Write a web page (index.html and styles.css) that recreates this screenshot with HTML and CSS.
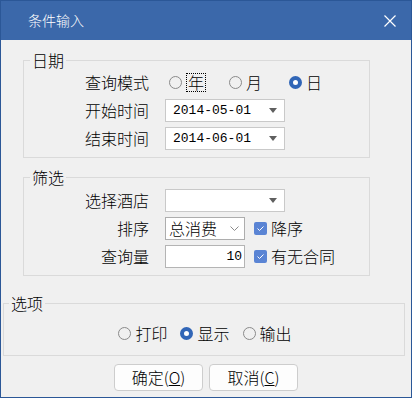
FILE: index.html
```html
<!DOCTYPE html>
<html lang="zh">

<head>
    <meta charset="UTF-8">
    <title>条件输入</title>
    <link rel="stylesheet" href="styles.css">
</head>

<body>
    <div class="window">
        <div class="titlebar">
            <span class="title">条件输入</span>
            <svg class="close" width="12" height="12" viewBox="0 0 12 12">
                <path d="M0.5 0.5 L11.5 11.5 M11.5 0.5 L0.5 11.5" stroke="#fff" stroke-width="1.2" fill="none" />
            </svg>
        </div>

        <div class="dlg_body">
            <fieldset class="group group_date">
                <legend>日期</legend>
                <div class="form_grid">
                    <span class="lbl">查询模式</span>
                    <div class="radios">
                        <span class="radio"><span class="dot"></span><span class="focus">年</span></span>
                        <span class="radio"><span class="dot"></span>月</span>
                        <span class="radio"><span class="dot on"></span>日</span>
                    </div>

                    <span class="lbl">开始时间</span>
                    <div class="combo">
                        <span class="mono">2014-05-01</span>
                        <svg width="8" height="5" viewBox="0 0 8 5"><polygon points="0,0 8,0 4,5" fill="#5f5f5f" /></svg>
                    </div>

                    <span class="lbl">结束时间</span>
                    <div class="combo">
                        <span class="mono">2014-06-01</span>
                        <svg width="8" height="5" viewBox="0 0 8 5"><polygon points="0,0 8,0 4,5" fill="#5f5f5f" /></svg>
                    </div>
                </div>
            </fieldset>

            <fieldset class="group group_filter">
                <legend>筛选</legend>
                <div class="form_grid">
                    <span class="lbl">选择酒店</span>
                    <div class="combo">
                        <span></span>
                        <svg width="8" height="5" viewBox="0 0 8 5"><polygon points="0,0 8,0 4,5" fill="#5f5f5f" /></svg>
                    </div>

                    <span class="lbl">排序</span>
                    <div class="line">
                        <div class="select">
                            <span>总消费</span>
                            <svg width="9" height="5" viewBox="0 0 9 5"><polyline points="0.5,0.5 4.5,4.5 8.5,0.5" stroke="#8a8a8a" fill="none" /></svg>
                        </div>
                        <span class="check">
                            <span class="box"><svg width="13" height="13" viewBox="0 0 13 13"><polyline points="3.5,6.5 5.5,8.5 9.5,4.5" stroke="#fff" stroke-width="1" fill="none" /></svg></span>
                            降序
                        </span>
                    </div>

                    <span class="lbl">查询量</span>
                    <div class="line">
                        <div class="num"><span class="mono">10</span></div>
                        <span class="check">
                            <span class="box"><svg width="13" height="13" viewBox="0 0 13 13"><polyline points="3.5,6.5 5.5,8.5 9.5,4.5" stroke="#fff" stroke-width="1" fill="none" /></svg></span>
                            有无合同
                        </span>
                    </div>
                </div>
            </fieldset>

            <fieldset class="group group_opts">
                <legend>选项</legend>
                <div class="opts">
                    <span class="radio"><span class="dot"></span>打印</span>
                    <span class="radio"><span class="dot on"></span>显示</span>
                    <span class="radio"><span class="dot"></span>输出</span>
                </div>
            </fieldset>

            <div class="buttons">
                <button class="btn">确定(<u>O</u>)</button>
                <button class="btn">取消(<u>C</u>)</button>
            </div>
        </div>
    </div>
</body>

</html>
```

FILE: styles.css
```css
* {
    box-sizing: border-box;
}

body {
    margin: 0;
    font-family: "Noto Sans CJK SC", "Liberation Sans", sans-serif;
    font-size: 16px;
    font-weight: 300;
    color: #000;
}

.window {
    width: 412px;
    height: 398px;
    border: 1px solid #2b5797;
    background-color: #f0f0f0;
    display: flex;
    flex-direction: column;
}

.titlebar {
    height: 39px;
    background-color: #3b68aa;
    display: flex;
    align-items: center;
    justify-content: space-between;
    padding: 0 15px 0 27px;
    color: #fff;
    font-size: 14px;
}

.title {
    line-height: 20px;
    margin-top: -1px;
}

.close {
    margin-top: 1px;
}

.dlg_body {
    flex: 1;
    display: flex;
    flex-direction: column;
}

.group {
    margin: 0;
    border: 1px solid #dadada;
    min-width: 0;
}

.group legend {
    padding: 0 2px;
    line-height: 20px;
    height: 20px;
}

.group_date {
    margin: 10px 0 0 22px;
    width: 347px;
    padding: 1px 6px 7px 6px;
}

.group_filter {
    margin: 9px 0 0 22px;
    width: 347px;
    padding: 2px 6px 7px 6px;
}

.group_opts {
    margin: 17px 0 0 2px;
    width: 402px;
    padding: 9px 6px 10px 5px;
}

.form_grid {
    display: grid;
    grid-template-columns: 119px 1fr;
    grid-auto-rows: 23px;
    column-gap: 16px;
    row-gap: 5px;
    align-items: center;
}

.lbl {
    text-align: right;
    line-height: 23px;
}

.radios {
    display: flex;
    height: 23px;
    align-items: center;
}

.radio {
    display: flex;
    align-items: center;
    gap: 4px;
    line-height: 23px;
}

.radios .radio {
    width: 60px;
    padding-left: 4px;
}

.dot {
    width: 13px;
    height: 13px;
    border-radius: 50%;
    border: 1px solid #8a8a8a;
    background-color: transparent;
}

.dot.on {
    border: 4px solid #3166b7;
    background-color: #fff;
}

.focus {
    border: 1px dotted #000;
    padding: 0 1px;
    line-height: 17px;
}

.mono {
    font-family: "Liberation Mono", "DejaVu Sans Mono", monospace;
    font-size: 13px;
    font-weight: 400;
}

.combo {
    width: 120px;
    height: 23px;
    border: 1px solid #c9c9c9;
    background-color: #fff;
    display: flex;
    align-items: center;
    justify-content: space-between;
    padding: 0 7px 0 7px;
}

.line {
    display: flex;
    align-items: center;
    height: 23px;
}

.select {
    width: 80px;
    height: 23px;
    border: 1px solid #adadad;
    background-color: #fff;
    display: flex;
    align-items: center;
    justify-content: space-between;
    padding: 0 5px 0 3px;
    line-height: 21px;
}

.num {
    width: 80px;
    height: 23px;
    border: 1px solid #b4b4b4;
    background-color: #fff;
    display: flex;
    align-items: center;
    justify-content: flex-end;
    padding-right: 2px;
}

.check {
    display: flex;
    align-items: center;
    gap: 4px;
    margin-left: 9px;
    line-height: 23px;
}

.box {
    width: 13px;
    height: 13px;
    border-radius: 2px;
    background-color: #5a84d4;
    display: flex;
}

.opts {
    display: flex;
    justify-content: center;
    gap: 13px;
    height: 23px;
    padding-left: 3px;
}

.buttons {
    display: flex;
    justify-content: center;
    gap: 6px;
    margin-top: 8px;
}

.btn {
    width: 89px;
    height: 27px;
    border: 1px solid #cdcdcd;
    border-radius: 4px;
    background-color: #fdfdfd;
    font-family: "Noto Sans CJK SC", "Liberation Sans", sans-serif;
    font-size: 16px;
    font-weight: 300;
    color: #000;
    padding: 0;
    line-height: 25px;
}
```
